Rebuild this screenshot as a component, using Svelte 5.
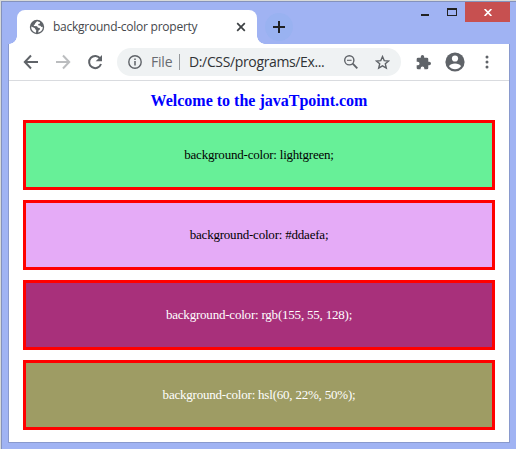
<script>
  const samples = [
    { name: 'green', text: 'background-color: lightgreen;' },
    { name: 'lilac', text: 'background-color: #ddaefa;' },
    { name: 'plum', text: 'background-color: rgb(155, 55, 128);' },
    { name: 'olive', text: 'background-color: hsl(60, 22%, 50%);' }
  ];
</script>

<div class="window">
  <header class="tabs">
    <div class="tab">
      <svg class="globe" width="16" height="16" viewBox="0 0 16 16">
        <circle cx="8" cy="8" r="7.2" fill="#5f6368" />
        <path d="M8.2 2.3 C7 3 7.4 3.8 6.2 4.1 L6 5.4 L4.8 5.8 L4.9 7.1 L8 7.2 L9 8.8 L10.8 9 L10.9 10.6 L9.5 11.5 L9.2 13.6 A5.8 5.8 0 0 0 13.8 7.8 L12.4 8 L11.4 6.7 L9.3 6.3 L9.2 4.9 L11 4.4 L11 3.2 Z M2.2 7.5 L5.6 9 L6.5 10.5 L7.2 11 L7 13.7 A5.8 5.8 0 0 1 2.2 7.5 Z" fill="#fff" />
      </svg>
      <span class="title">background-color property</span>
      <svg class="close-tab" width="10" height="10" viewBox="0 0 10 10"><path d="M1.2 1.2 8.8 8.8M8.8 1.2 1.2 8.8" stroke="#3c4043" stroke-width="1.7" /></svg>
    </div>
    <div class="new-tab">
      <svg width="12" height="12" viewBox="0 0 12 12"><path d="M6 0v12M0 6h12" stroke="#202124" stroke-width="2" /></svg>
    </div>
    <div class="controls">
      <svg class="minimize" width="8" height="2"><path d="M0 1h8" stroke="#222" stroke-width="2" /></svg>
      <svg class="maximize" width="10" height="8"><path d="M.5 0v8M9.5 0v8M0 7.5h10" stroke="#222" /><path d="M0 1h10" stroke="#222" stroke-width="2" /></svg>
      <div class="close">
        <svg width="8" height="7" viewBox="0 0 8 7"><path d="M.6 0 7.4 7M7.4 0 .6 7" stroke="#fff" stroke-width="1.7" /></svg>
      </div>
    </div>
  </header>

  <div class="panel">
    <nav>
      <svg class="back" width="16" height="16" viewBox="0 0 16 16"><path d="M15 8H2M8 1.5 1.8 8 8 14.5" fill="none" stroke="#5f6368" stroke-width="2" /></svg>
      <svg class="forward" width="16" height="16" viewBox="0 0 16 16"><path d="M1 8h13M8 1.5 14.2 8 8 14.5" fill="none" stroke="#bbbdbf" stroke-width="2" /></svg>
      <svg class="reload" width="16" height="16" viewBox="0 0 16 16"><path d="M13.3 4.6A6.1 6.1 0 1 0 14 10" fill="none" stroke="#5f6368" stroke-width="2" /><path d="M15 1v6.3H8.7Z" fill="#5f6368" /></svg>
      <div class="address">
        <svg class="info" width="14" height="14" viewBox="0 0 14 14"><circle cx="7" cy="7" r="6.2" fill="none" stroke="#5f6368" stroke-width="1.4" /><path d="M7 6v4.5M7 3.5v1.6" stroke="#5f6368" stroke-width="1.5" /></svg>
        <span class="scheme">File</span>
        <span class="divider"></span>
        <span class="path">D:/CSS/programs/Ex...</span>
        <svg class="zoom" width="14" height="14" viewBox="0 0 14 14"><circle cx="5.3" cy="5.3" r="4.6" fill="none" stroke="#5f6368" stroke-width="1.4" /><path d="m8.7 8.7 4.6 4.6" stroke="#5f6368" stroke-width="1.9" /><path d="M3 5.3h4.6" stroke="#5f6368" stroke-width="1.1" /></svg>
        <svg class="star" width="15" height="15" viewBox="0 0 15 15"><path d="M7.5 1.6 9.2 5.6 13.6 6 10.3 8.8 11.3 13.1 7.5 10.8 3.7 13.1 4.7 8.8 1.4 6 5.8 5.6Z" fill="none" stroke="#5f6368" stroke-width="1.4" /></svg>
      </div>
      <svg class="extensions" width="15" height="15" viewBox="0 0 22 22"><path d="M19.5 10H18V6a2 2 0 0 0-2-2h-4V2.500a2.500 2.500 0 0 0-5 0V4H3a2 2 0 0 0-2 2v3.800h1.500a2.700 2.700 0 0 1 0 5.400H1V19a2 2 0 0 0 2 2h3.800v-1.500a2.700 2.700 0 0 1 5.400 0V21H16a2 2 0 0 0 2-2v-4h1.500a2.500 2.500 0 0 0 0-5Z" fill="#5f6368" /></svg>
      <svg class="profile" width="20" height="20" viewBox="0 0 20 20"><circle cx="10" cy="10" r="9.6" fill="#5f6368" /><circle cx="10" cy="6.5" r="3.1" fill="#fff" /><path d="M4 14.200C5.500 10.700 14.500 10.700 16 14.200C14.500 16.300 12.500 17.200 10 17.200S5.500 16.300 4 14.200Z" fill="#fff" /></svg>
      <svg class="menu" width="4" height="14" viewBox="0 0 4 14" fill="#5f6368"><circle cx="2" cy="2" r="1.5" /><circle cx="2" cy="7" r="1.5" /><circle cx="2" cy="12" r="1.5" /></svg>
    </nav>
    <main>
      <h1>Welcome to the javaTpoint.com</h1>
      {#each samples as sample}
        <div class="sample {sample.name}"><span>{sample.text}</span></div>
      {/each}
    </main>
  </div>
</div>

<style>
  :global(body) {
    background: #d8dad8;
    overflow: hidden;
  }
  svg, span {
    display: block;
    flex: none;
  }
  .window {
    box-sizing: border-box;
    width: 515px;
    height: 448px;
    margin: 1px 0 0 1px;
    border: solid #8492bc;
    border-width: 1px 0 0 1px;
    background: #a0b3f3;
    padding-left: 6px;
  }
  .tabs {
    display: flex;
    height: 42px;
  }
  .tab {
    position: relative;
    box-sizing: border-box;
    display: flex;
    align-items: center;
    width: 240px;
    height: 34px;
    margin: 8px 0 0 9px;
    padding-left: 12px;
    border-radius: 8px 8px 0 0;
    background: #fff;
  }
  .tab::before, .tab::after {
    content: '';
    position: absolute;
    bottom: 0;
    width: 8px;
    height: 8px;
  }
  .tab::before {
    left: -8px;
    background: radial-gradient(circle at 0 0, transparent 7.500px, #fff 8px);
  }
  .tab::after {
    right: -8px;
    background: radial-gradient(circle at 100% 0, transparent 7.500px, #fff 8px);
  }
  .title {
    width: 146px;
    margin-left: 8px;
    font: 12px/16px 'Open Sans', sans-serif;
    letter-spacing: -0.25px;
    color: #45484c;
    white-space: nowrap;
  }
  .close-tab {
    margin-left: 37px;
  }
  .new-tab {
    display: grid;
    place-items: center;
    width: 28px;
    height: 28px;
    margin: 11px 0 0 8px;
    border-radius: 50%;
    background: #99b2f1;
  }
  .controls {
    display: flex;
    margin-left: auto;
    margin-right: 6px;
  }
  .minimize {
    margin: 12px 18px 0 0;
  }
  .maximize {
    margin: 6px 8px 0 0;
  }
  .close {
    display: grid;
    place-items: center;
    width: 45px;
    height: 20px;
    background: #c75050;
  }
  .panel {
    box-sizing: border-box;
    width: 502px;
    height: 399px;
    border: 1px solid #8999cd;
    border-top: 0;
    background: #fff;
  }
  nav {
    box-sizing: border-box;
    display: flex;
    align-items: center;
    height: 37px;
    padding-left: 14px;
    border-bottom: 1px solid #d9dbdf;
  }
  .forward, .reload {
    margin-left: 16px;
  }
  .address {
    display: flex;
    align-items: center;
    flex: none;
    width: 284px;
    height: 28px;
    margin-left: 14px;
    border-radius: 14px;
    background: #eff2f3;
    font: 14px/20px 'Open Sans', sans-serif;
    white-space: nowrap;
  }
  .info {
    margin-left: 11px;
  }
  .scheme {
    width: 28px;
    margin-left: 9px;
    letter-spacing: -0.2px;
    color: #686b70;
  }
  .divider {
    width: 1px;
    height: 16px;
    background: #96999c;
  }
  .path {
    width: 155px;
    margin-left: 9px;
    letter-spacing: -0.36px;
    color: #303236;
  }
  .star {
    margin-left: 17px;
  }
  .extensions {
    margin-left: 15px;
  }
  .profile {
    margin-left: 14px;
  }
  .menu {
    margin-left: 20px;
  }
  main {
    display: flex;
    flex-direction: column;
    gap: 10px;
    padding: 11px 14px 0;
    font-family: 'Liberation Serif', serif;
    text-align: center;
  }
  h1 {
    height: 18px;
    margin: 0;
    font-size: 16px;
    line-height: 18px;
    color: #00f;
  }
  .sample {
    display: grid;
    place-items: center;
    box-sizing: border-box;
    height: 70px;
    border: 3px solid #f00;
    font-size: 13px;
    line-height: 16px;
    letter-spacing: -0.21px;
  }
  .green { background: #67f098; }
  .lilac { background: #e5abf7; }
  .plum { background: #a8307b; color: #fff; }
  .olive { background: #9e9c64; color: #fff; }
</style>
